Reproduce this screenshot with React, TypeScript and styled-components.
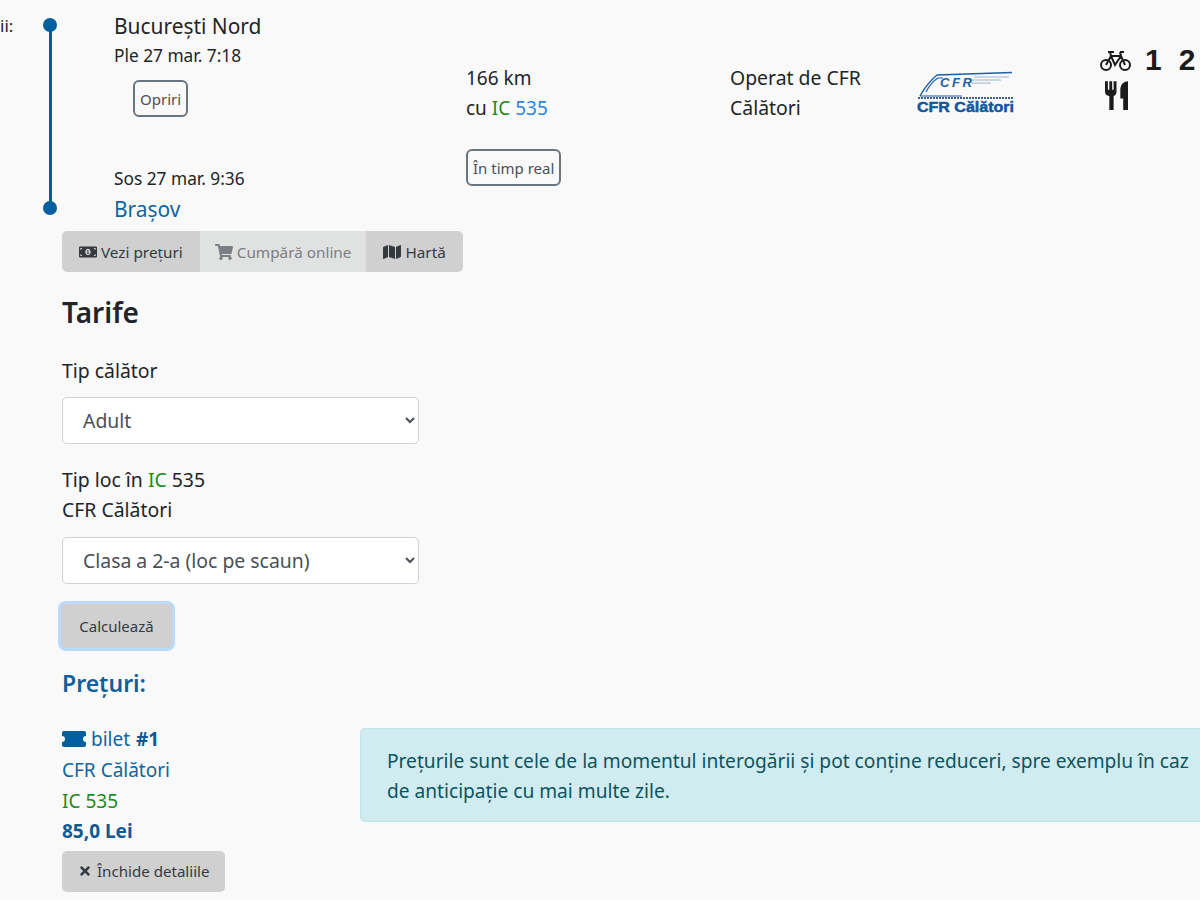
import React from 'react';
import styled, { createGlobalStyle } from 'styled-components';
import { FaMap, FaMoneyBillAlt, FaShoppingCart, FaTimes } from 'react-icons/fa';

const GlobalStyle = createGlobalStyle`
  html, body {
    margin: 0;
    height: 900px;
    overflow: hidden;
    background: #f9f9f9;
    color: #212529;
    font-family: "Noto Sans", "Open Sans", sans-serif;
    font-size: 19px;
    line-height: 30px;
  }
`;

const Page = styled.div`
  width: 1200px;
  height: 900px;
  overflow: hidden;
`;

const Journey = styled.section`
  display: flex;
  height: 231px;
  padding-top: 11px;
  box-sizing: border-box;
`;

const RowLabel = styled.div`
  width: 13px;
  height: 30px;
  overflow: hidden;
  white-space: nowrap;
  font-size: 17px;
`;

const Rail = styled.div`
  margin: 7px 0 0 30px;
  width: 14px;
  height: 197px;
  display: flex;
  flex-direction: column;
  align-items: center;
`;

const Dot = styled.span`
  width: 14px;
  height: 14px;
  flex: none;
  border-radius: 50%;
  background: #005f9e;
`;

const RailLine = styled.span`
  flex: 1;
  width: 3px;
  margin: -1px 0;
  background: #005f9e;
`;

const Stops = styled.div`
  margin-left: 57px;
  width: 352px;
`;

const Station = styled.div<{ $link?: boolean }>`
  height: 30px;
  font-size: 20.9px;
  color: ${props => (props.$link ? '#11659f' : '#212529')};
`;

const Time = styled.div`
  height: 30px;
  font-size: 17.3px;
`;

const OutlineButton = styled.button`
  display: block;
  box-sizing: border-box;
  height: 37px;
  padding: 0 5px;
  border: 2px solid #6c757d;
  border-radius: 6px;
  background: transparent;
  color: #495057;
  font: inherit;
  font-size: 15px;
`;

const StopsButton = styled(OutlineButton)`
  margin: 9px 0 47px 19px;
`;

const Trip = styled.div`
  width: 264px;
  padding-top: 52px;
`;

const Line = styled.div`
  height: 30px;
`;

const OperatorLine = styled(Line)`
  font-size: 19.4px;
`;

const Green = styled.span`
  color: #1f8a1f;
`;

const Blue = styled.span`
  color: #2b86e0;
`;

const LiveButton = styled(OutlineButton)`
  margin-top: 26px;
`;

const Operator = styled.div`
  width: 187px;
  padding-top: 52px;
`;

const Logo = styled.svg`
  display: block;
  width: 100px;
  height: 44px;
  margin-top: 59px;
  flex: none;
`;

const Amenities = styled.div`
  margin-left: 83px;
  padding-top: 33px;
`;

const BikeRow = styled.div`
  display: flex;
  align-items: center;
  height: 32px;
  color: #1b1b1b;
`;

const Seat = styled.b`
  font-family: "Liberation Sans", Arial, sans-serif;
  font-size: 30px;
  line-height: 32px;
  margin-left: 14px;
  &:last-child {
    margin-left: 17px;
  }
`;

const CutleryIcon = styled.svg`
  display: block;
  width: 23px;
  height: 29px;
  margin: 5px 0 0 5px;
  fill: #1b1b1b;
`;

const BikeIcon = styled.svg`
  display: block;
  width: 31px;
  height: 21px;
  flex: none;
  fill: none;
  stroke: #1b1b1b;
  stroke-width: 2;
`;

const Details = styled.section`
  padding-left: 62px;
`;

const ActionGroup = styled.div`
  display: inline-flex;
  height: 41px;
  border-radius: 5px;
  overflow: hidden;
`;

const Action = styled.button<{ $disabled?: boolean }>`
  display: flex;
  align-items: center;
  gap: 4px;
  padding: 0 ${props => (props.$disabled ? 15 : 17)}px;
  border: 0;
  background: ${props => (props.$disabled ? '#e0e1e1' : '#d0d0d0')};
  color: ${props => (props.$disabled ? '#7b7f83' : '#343a40')};
  font: inherit;
  font-size: 15.3px;
  line-height: 38px;
  svg {
    font-size: 18px;
  }
`;

const Heading = styled.h2`
  margin: 20px 0 24px;
  font-size: 28px;
  line-height: 40px;
  font-weight: 600;
`;

const FieldLabel = styled.div`
  height: 30px;
  font-size: 19.4px;
`;

const Select = styled.select`
  display: block;
  box-sizing: border-box;
  width: 357px;
  height: 47px;
  margin: 11px 0 21px;
  padding: 0 16px;
  border: 1px solid #ced4da;
  border-radius: 5px;
  background: #fff;
  color: #495057;
  font: inherit;
  font-size: 19.4px;
`;

const SeatSelect = styled(Select)`
  margin-top: 12px;
`;

const Calculate = styled.button`
  display: block;
  box-sizing: border-box;
  width: 111px;
  height: 44px;
  margin: -1px 0 0 -1px;
  border: 0;
  border-radius: 5px;
  background: #d0d0d0;
  box-shadow: 0 0 0 3px #b9dafb;
  color: #343a40;
  font: inherit;
  font-size: 15px;
  line-height: 38px;
`;

const PricesTitle = styled.h3`
  margin: 18px 0 24px;
  font-size: 23px;
  line-height: 34px;
  font-weight: 600;
  color: #11609b;
`;

const PriceRow = styled.div`
  display: flex;
  align-items: flex-start;
`;

const Ticket = styled.div`
  width: 298px;
  flex: none;
`;

const TicketLine = styled.div<{ $tone?: string }>`
  height: 30.7px;
  display: flex;
  align-items: center;
  gap: 5px;
  color: ${props => props.$tone || '#11659f'};
`;

const TicketNumber = styled.b`
  color: #0f5a92;
  margin-left: 1px;
`;

const TicketIcon = styled.svg`
  display: block;
  width: 24px;
  height: 16px;
  flex: none;
  fill: #005f9e;
`;

const Amount = styled.b`
  color: #0f5a92;
`;

const CloseButton = styled.button`
  display: flex;
  align-items: center;
  gap: 5px;
  height: 41px;
  margin-top: 4px;
  padding: 0 16px;
  border: 0;
  border-radius: 5px;
  background: #d0d0d0;
  color: #343a40;
  font: inherit;
  font-size: 15.1px;
  line-height: 38px;
`;

const Notice = styled.div`
  box-sizing: border-box;
  width: 860px;
  height: 94px;
  margin-top: 4px;
  flex: none;
  padding: 17px 26px;
  border: 1px solid #bee5eb;
  border-radius: 5px;
  background: #d1ecf1;
  color: #0c5460;
  font-size: 19.15px;
  white-space: nowrap;
`;

function CfrLogo() {
  return (
    <Logo viewBox="0 0 100 44">
      <path d="M3 26 C8 17 14 10 20 5 L95 2.5" fill="none" stroke="#1f5fa8" strokeWidth="1.4" />
      <path d="M3 26 H45 M9 22 C12 16 16 11 21 8 H26" fill="none" stroke="#1f5fa8" strokeWidth="1.2" />
      <text x="23" y="17" fontFamily="Liberation Sans" fontStyle="italic" fontWeight="700" fontSize="13" letterSpacing="2.6" fill="#1f5fa8">CFR</text>
      <path d="M57 7 H92 M55 10 H84 M54 13 H74" stroke="#9db4cf" strokeWidth="1.2" />
      <path d="M1 28 H97" stroke="#3f5f90" strokeWidth="2" strokeDasharray="2 1" />
      <text x="0" y="42" fontFamily="Liberation Sans" fontWeight="700" fontSize="15" textLength="97" lengthAdjust="spacingAndGlyphs" stroke="#14569c" strokeWidth="0.5" fill="#14569c">CFR Călători</text>
    </Logo>
  );
}

export default function App() {
  return (
    <Page>
      <GlobalStyle />
      <Journey>
        <RowLabel>ii:</RowLabel>
        <Rail>
          <Dot />
          <RailLine />
          <Dot />
        </Rail>
        <Stops>
          <Station>București Nord</Station>
          <Time>Ple 27 mar. 7:18</Time>
          <StopsButton>Opriri</StopsButton>
          <Time>Sos 27 mar. 9:36</Time>
          <Station $link>Brașov</Station>
        </Stops>
        <Trip>
          <Line>166 km</Line>
          <Line>
            cu <Green>IC</Green> <Blue>535</Blue>
          </Line>
          <LiveButton>În timp real</LiveButton>
        </Trip>
        <Operator>
          <OperatorLine>Operat de CFR</OperatorLine>
          <OperatorLine>Călători</OperatorLine>
        </Operator>
        <CfrLogo />
        <Amenities>
          <BikeRow>
            <BikeIcon viewBox="0 0 31 21">
              <circle cx="6" cy="15" r="5" />
              <circle cx="25" cy="15" r="5" />
              <path d="M6 15 L11 6 H21 L25 15 M11 6 L15 15 L21 6 M20 2 H24 M21 6 L20 2 M8 2 H14 M11 6 L10 2" />
            </BikeIcon>
            <Seat>1</Seat>
            <Seat>2</Seat>
          </BikeRow>
          <CutleryIcon viewBox="0 0 24 30">
            <path d="M0 0 h3 v9 h1.5 V0 h3 v9 h1.5 V0 h3 v11 c0 2.5-1.5 4-3 4.5 V30 h-4.5 V15.5 C1.5 15 0 13.5 0 11z" />
            <path d="M24 0 V30 h-5 V18 h-3 V9 C16 4 19 0 24 0z" />
          </CutleryIcon>
        </Amenities>
      </Journey>
      <Details>
        <ActionGroup>
          <Action>
            <FaMoneyBillAlt />
            Vezi prețuri
          </Action>
          <Action $disabled>
            <FaShoppingCart />
            Cumpără online
          </Action>
          <Action>
            <FaMap />
            Hartă
          </Action>
        </ActionGroup>
        <Heading>Tarife</Heading>
        <FieldLabel>Tip călător</FieldLabel>
        <Select defaultValue="adult">
          <option value="adult">Adult</option>
        </Select>
        <FieldLabel>
          Tip loc în <Green>IC</Green> 535
        </FieldLabel>
        <FieldLabel>CFR Călători</FieldLabel>
        <SeatSelect defaultValue="c2">
          <option value="c2">Clasa a 2-a (loc pe scaun)</option>
        </SeatSelect>
        <Calculate>Calculează</Calculate>
        <PricesTitle>Prețuri:</PricesTitle>
        <PriceRow>
          <Ticket>
            <TicketLine>
              <TicketIcon viewBox="0 0 24 16">
                <path d="M2 0 H22 a2 2 0 0 1 2 2 V5 a3 3 0 0 0 0 6 V14 a2 2 0 0 1-2 2 H2 a2 2 0 0 1-2-2 V11 a3 3 0 0 0 0-6 V2 a2 2 0 0 1 2-2z" />
              </TicketIcon>
              bilet <TicketNumber>#1</TicketNumber>
            </TicketLine>
            <TicketLine>CFR Călători</TicketLine>
            <TicketLine $tone="#1f8a1f">IC 535</TicketLine>
            <TicketLine>
              <Amount>85,0 Lei</Amount>
            </TicketLine>
            <CloseButton>
              <FaTimes size={14} />
              Închide detaliile
            </CloseButton>
          </Ticket>
          <Notice>
            Prețurile sunt cele de la momentul interogării și pot conține reduceri, spre exemplu în caz
            <br />
            de anticipație cu mai multe zile.
          </Notice>
        </PriceRow>
      </Details>
    </Page>
  );
}
